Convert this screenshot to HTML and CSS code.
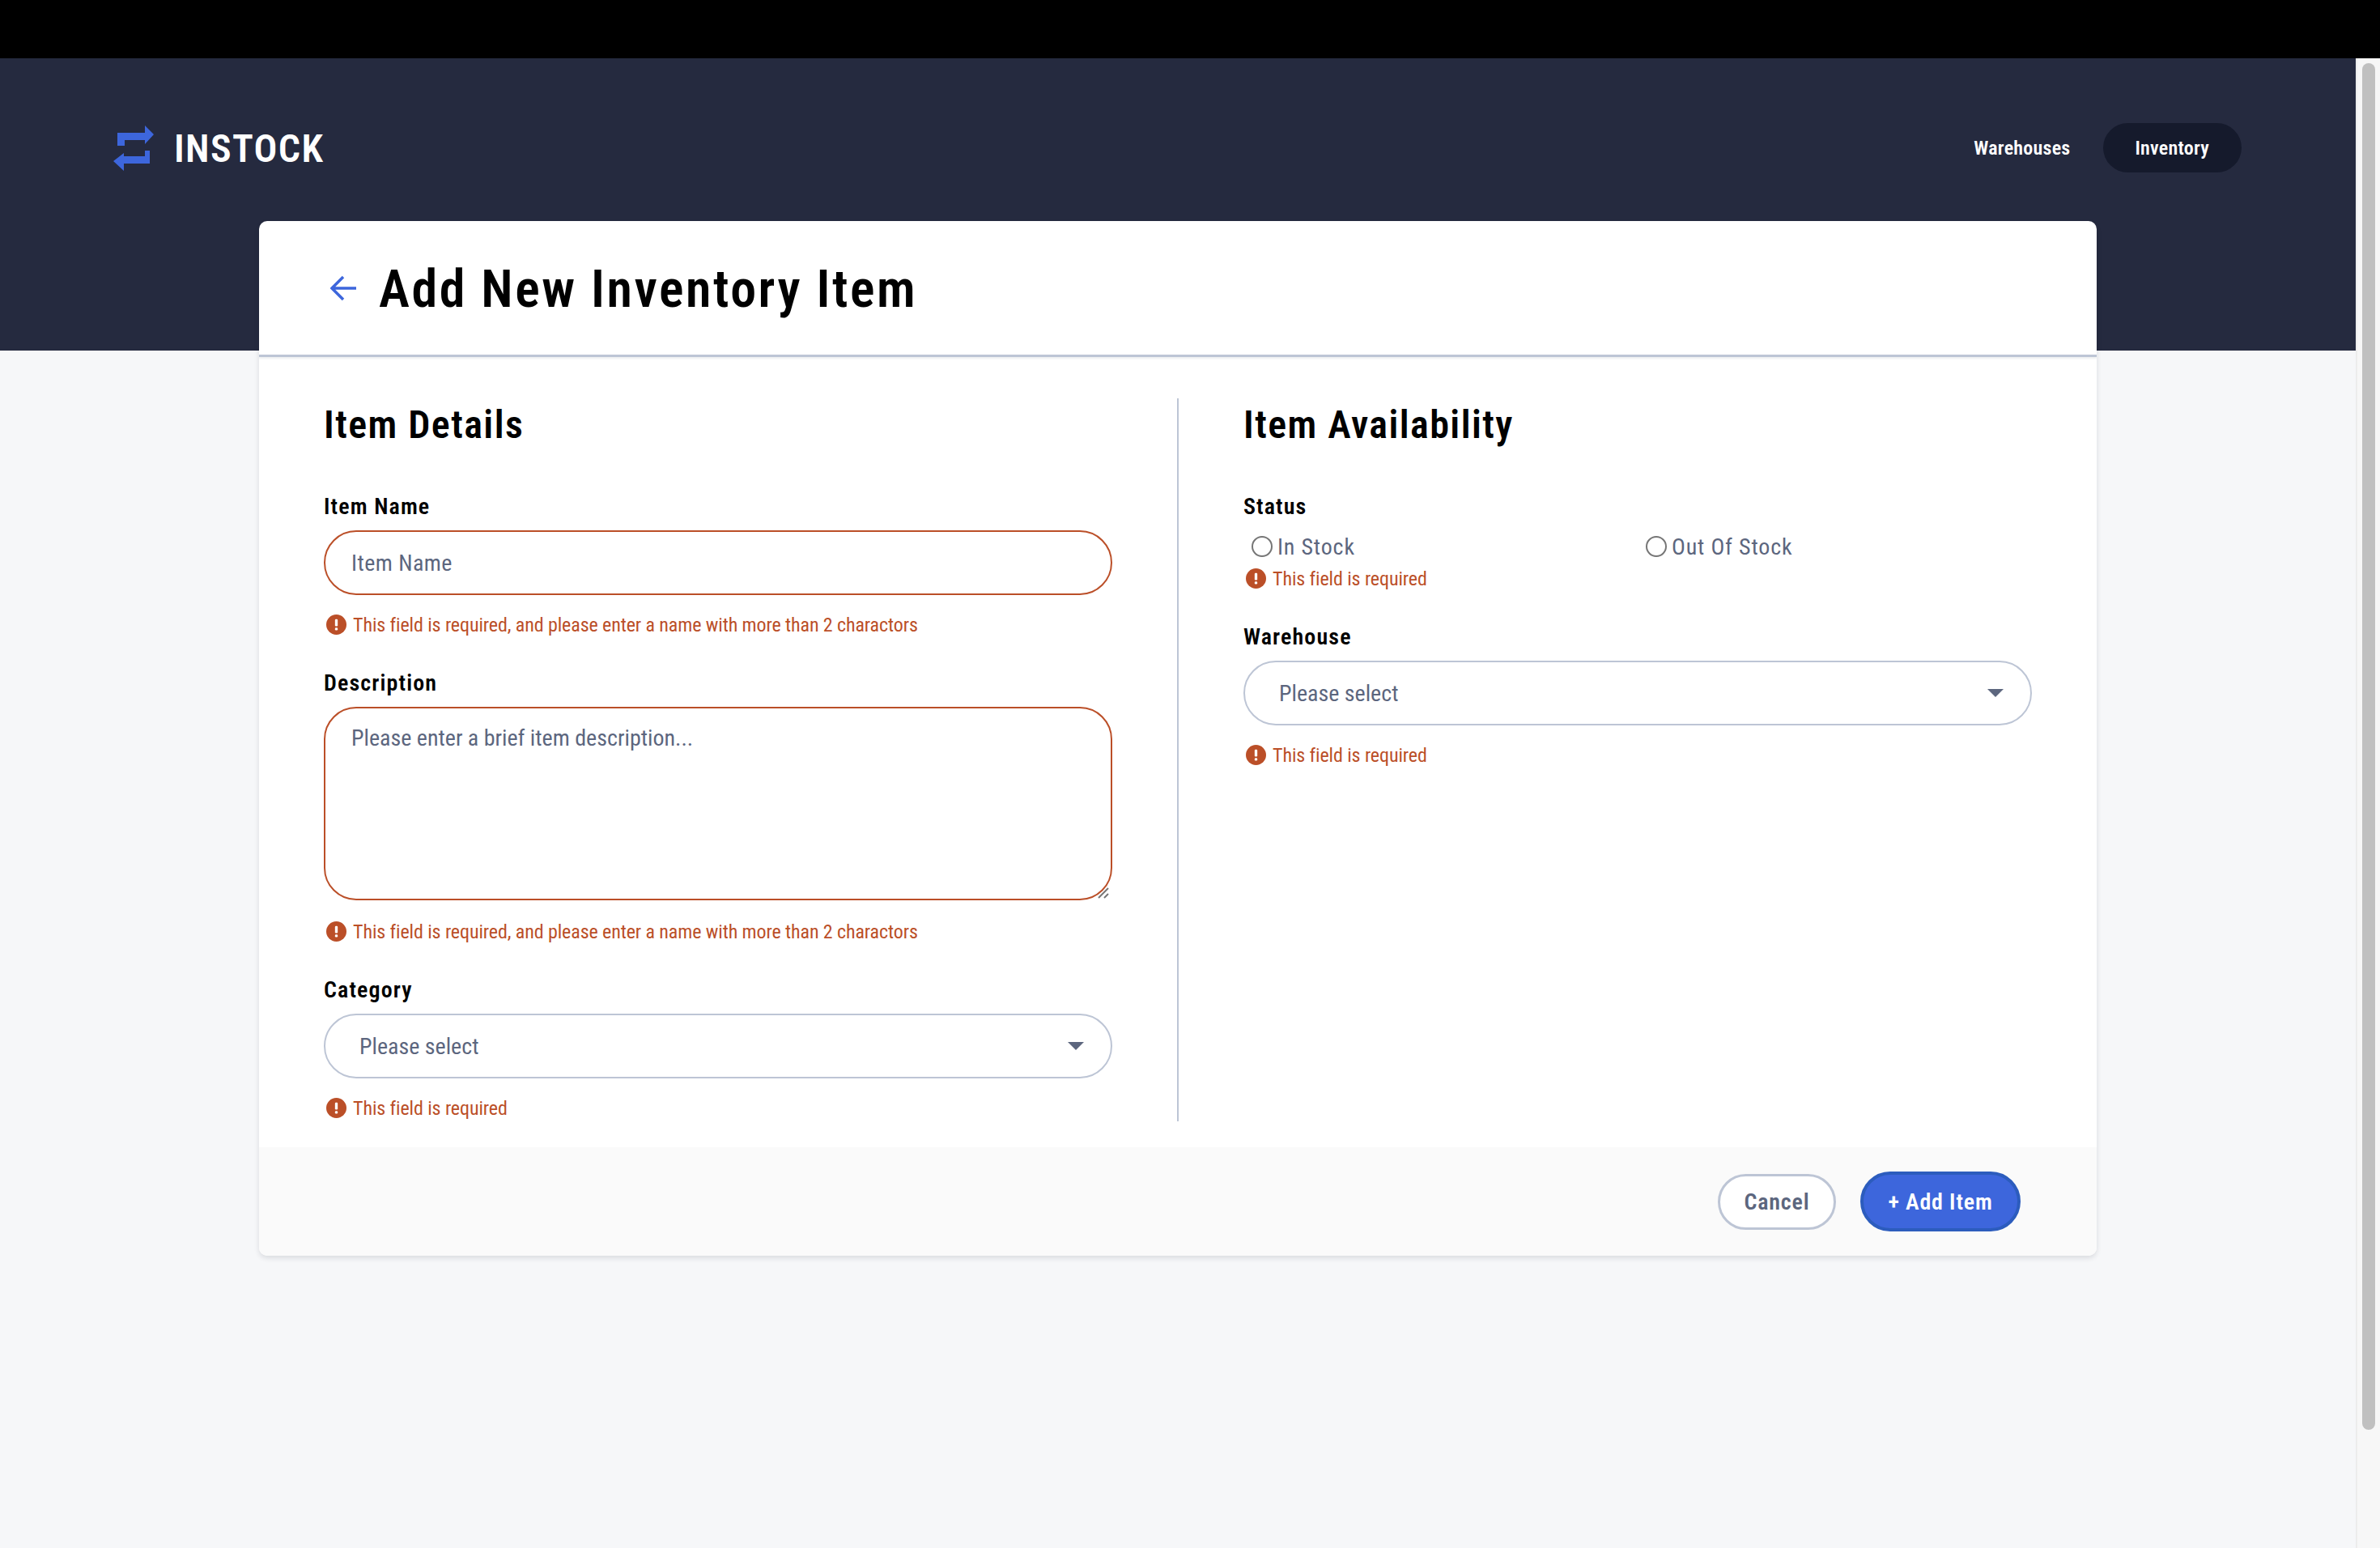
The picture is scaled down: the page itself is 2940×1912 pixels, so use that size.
FILE: index.html
```html
<!DOCTYPE html>
<html lang="en">
<head>
<meta charset="utf-8">
<title>InStock - Add New Inventory Item</title>
<link rel="stylesheet" href="styles.css">
</head>
<body>
<div class="topbar"></div>
<div class="window">
  <div class="page">
    <header class="site-header">
      <a class="brand" href="#">
        <svg class="brand-icon" viewBox="0 0 50 56" aria-hidden="true"><path d="M5 9H39V0L50 11L39 23V18H14V25H5Z"/><path d="M45 31H39V38H13V34L0 44L13 56V47H45Z"/></svg>
        <span class="brand-name">INSTOCK</span>
      </a>
      <nav class="nav">
        <a class="nav-link" href="#">Warehouses</a>
        <a class="nav-link nav-link-active" href="#">Inventory</a>
      </nav>
    </header>
    <main class="card">
      <div class="card-title">
        <svg class="back-icon" viewBox="0 0 32 32" aria-hidden="true"><path d="M32 16H3M16 2L2 16L16 30"/></svg>
        <h1 class="title">Add New Inventory Item</h1>
      </div>
      <form class="form-body">
        <section class="col col-left">
          <h2 class="col-title">Item Details</h2>
          <div class="field field-first">
            <label class="label">Item Name</label>
            <input class="control control-error control-name" type="text" placeholder="Item Name">
            <p class="error"><svg class="error-icon" viewBox="0 0 24 24"><circle cx="12" cy="12" r="12"/><rect x="10.4" y="5.5" width="3.2" height="8.5" rx="1.2"/><rect x="10.4" y="15.6" width="3.2" height="3.2" rx="1.2"/></svg>This field is required, and please enter a name with more than 2 charactors</p>
          </div>
          <div class="field">
            <label class="label">Description</label>
            <div class="area-wrap">
              <textarea class="control control-area control-error" placeholder="Please enter a brief item description..."></textarea>
              <svg class="grip" viewBox="0 0 14 14" aria-hidden="true"><path d="M1 13L13 1M8 13L13 8"/></svg>
            </div>
            <p class="error error-area"><svg class="error-icon" viewBox="0 0 24 24"><circle cx="12" cy="12" r="12"/><rect x="10.4" y="5.5" width="3.2" height="8.5" rx="1.2"/><rect x="10.4" y="15.6" width="3.2" height="3.2" rx="1.2"/></svg>This field is required, and please enter a name with more than 2 charactors</p>
          </div>
          <div class="field">
            <label class="label">Category</label>
            <div class="select-wrap">
              <select class="control control-select"><option>Please select</option></select>
              <svg class="caret" viewBox="0 0 20 10"><path d="M0 0H20L10 10Z"/></svg>
            </div>
            <p class="error"><svg class="error-icon" viewBox="0 0 24 24"><circle cx="12" cy="12" r="12"/><rect x="10.4" y="5.5" width="3.2" height="8.5" rx="1.2"/><rect x="10.4" y="15.6" width="3.2" height="3.2" rx="1.2"/></svg>This field is required</p>
          </div>
        </section>
        <section class="col col-right">
          <h2 class="col-title">Item Availability</h2>
          <div class="field field-first">
            <span class="label">Status</span>
            <div class="radios">
              <label class="radio"><input class="radio-input" type="radio" name="status">In Stock</label>
              <label class="radio"><input class="radio-input" type="radio" name="status">Out Of Stock</label>
            </div>
            <p class="error error-status"><svg class="error-icon" viewBox="0 0 24 24"><circle cx="12" cy="12" r="12"/><rect x="10.4" y="5.5" width="3.2" height="8.5" rx="1.2"/><rect x="10.4" y="15.6" width="3.2" height="3.2" rx="1.2"/></svg>This field is required</p>
          </div>
          <div class="field">
            <label class="label">Warehouse</label>
            <div class="select-wrap">
              <select class="control control-select"><option>Please select</option></select>
              <svg class="caret" viewBox="0 0 20 10"><path d="M0 0H20L10 10Z"/></svg>
            </div>
            <p class="error"><svg class="error-icon" viewBox="0 0 24 24"><circle cx="12" cy="12" r="12"/><rect x="10.4" y="5.5" width="3.2" height="8.5" rx="1.2"/><rect x="10.4" y="15.6" width="3.2" height="3.2" rx="1.2"/></svg>This field is required</p>
          </div>
        </section>
      </form>
      <footer class="card-footer">
        <button class="btn btn-cancel" type="button">Cancel</button>
        <button class="btn btn-add" type="button">+ Add Item</button>
      </footer>
    </main>
  </div>
  <div class="scrollbar"><div class="scroll-thumb"></div></div>
</div>
</body>
</html>
```
FILE: styles.css
```css
* { box-sizing: border-box; }
html, body { margin: 0; height: 100%; }
body {
  display: flex;
  flex-direction: column;
  height: 1912px;
  overflow: hidden;
  background: #f6f7f9;
  font-family: Roboto, "Open Sans", sans-serif;
  font-stretch: 75%;
  color: #000;
}
.topbar { height: 72px; background: #000; flex: none; }
.window { flex: 1; display: flex; min-height: 0; }
.page { flex: 1; min-width: 0; }

.site-header {
  height: 361px;
  background: #252a3f;
  padding: 80px 141px 0 140px;
  display: flex;
  justify-content: space-between;
  align-items: flex-start;
}
.brand { display: flex; align-items: center; gap: 25px; height: 61px; text-decoration: none; }
.brand-icon { width: 50px; height: 56px; fill: #3d66dc; }
.brand-name { font-size: 48px; font-weight: 600; color: #fff; letter-spacing: 0.028em; padding-top: 2px; }
.nav { display: flex; }
.nav-link {
  height: 61px;
  padding: 0 40px;
  display: flex;
  align-items: center;
  border-radius: 31px;
  font-size: 24px;
  font-weight: 600;
  letter-spacing: 0.01em;
  color: #fff;
  text-decoration: none;
}
.nav-link-active { background: #151a2c; }

.card {
  width: 2270px;
  margin: -160px 0 0 320px;
  background: #fff;
  border-radius: 10px;
  box-shadow: 0 3px 6px rgba(19, 24, 44, 0.12);
  overflow: hidden;
}
.card-title {
  height: 168px;
  display: flex;
  align-items: center;
  padding-left: 88px;
  gap: 28px;
  border-bottom: 3px solid #bdc5d5;
  box-shadow: 0 2px 2px rgba(19, 24, 44, 0.07);
}
.back-icon { width: 32px; height: 32px; fill: none; stroke: #3d66dc; stroke-width: 3.5; flex: none; }
.title { margin: 0; padding-top: 5px; font-size: 64px; font-weight: 600; line-height: 80px; letter-spacing: 0.04em; }

.form-body { display: grid; grid-template-columns: 1136px 1134px; padding: 51px 0 32px; }
.col { padding: 0 80px; }
.col-left { border-right: 2px solid #bdc5d5; padding-right: 80px; }
.col-title { margin: 0 0 -3px; padding-top: 3px; font-size: 48px; font-weight: 600; line-height: 60px; letter-spacing: 0.03em; }

.field { margin-top: 36px; }
.field-first { margin-top: 54px; }
.label { display: block; font-size: 28px; font-weight: 600; line-height: 40px; margin-bottom: 9px; letter-spacing: 0.04em; }

.control {
  display: block;
  width: 100%;
  height: 80px;
  border: 2px solid #bdc5d5;
  border-radius: 40px;
  background: #fff;
  padding: 0 32px;
  font: inherit;
  font-size: 28px;
  color: #5c667e;
  outline: none;
}
.control::placeholder { color: #5c667e; opacity: 1; }
.control-error { border-color: #bb4f28; }
.control-name { letter-spacing: 0.016em; }
.control-area { height: 239px; padding: 17px 32px; line-height: 40px; resize: none; }
.area-wrap, .select-wrap { position: relative; }
.grip { position: absolute; right: 4px; bottom: 2px; width: 14px; height: 14px; fill: none; stroke: #777; stroke-width: 2; }
.control-select { appearance: none; padding: 0 42px; }
.caret { position: absolute; right: 35px; top: 35px; width: 20px; height: 10px; fill: #5c667e; }

.error {
  display: flex;
  align-items: center;
  gap: 8px;
  margin: 19px 0 0 3px;
  padding-top: 2px;
  height: 34px;
  font-size: 24px;
  letter-spacing: -0.1px;
  color: #bb4f28;
}
.error-area { margin-top: 21px; }
.error-status { margin-top: 2px; }
.error-icon { width: 25px; height: 25px; margin-top: -2px; flex: none; fill: #bb4f28; }
.error-icon rect { fill: #fff; }

.radios { display: grid; grid-template-columns: 487px 1fr; padding-left: 10px; margin-top: 3px; }
.radio { display: flex; align-items: center; gap: 6px; height: 40px; font-size: 28px; letter-spacing: 0.03em; color: #5c667e; }
.radio-input {
  appearance: none;
  margin: 0;
  width: 26px;
  height: 26px;
  border: 2px solid #767676;
  border-radius: 50%;
  background: #fff;
}

.card-footer {
  height: 134px;
  background: #fafafa;
  display: flex;
  justify-content: flex-end;
  align-items: center;
  gap: 30px;
  padding-right: 94px;
}
.btn { font: inherit; font-size: 28px; font-weight: 600; border-radius: 40px; padding: 0; letter-spacing: 0.03em; }
.btn-cancel { width: 146px; height: 69px; background: #fff; border: 3px solid #bdc5d5; color: #5c667e; }
.btn-add { width: 198px; height: 74px; background: #3d66dc; border: 4px solid #2c5cbd; color: #fff; }

.scrollbar {
  flex: none;
  width: 30px;
  background: #f7f7f7;
  border-left: 2px solid #ececec;
  padding: 6px 6px 0 6px;
}
.scroll-thumb { height: 1688px; background: #c0c0c0; border-radius: 8px; }
```
